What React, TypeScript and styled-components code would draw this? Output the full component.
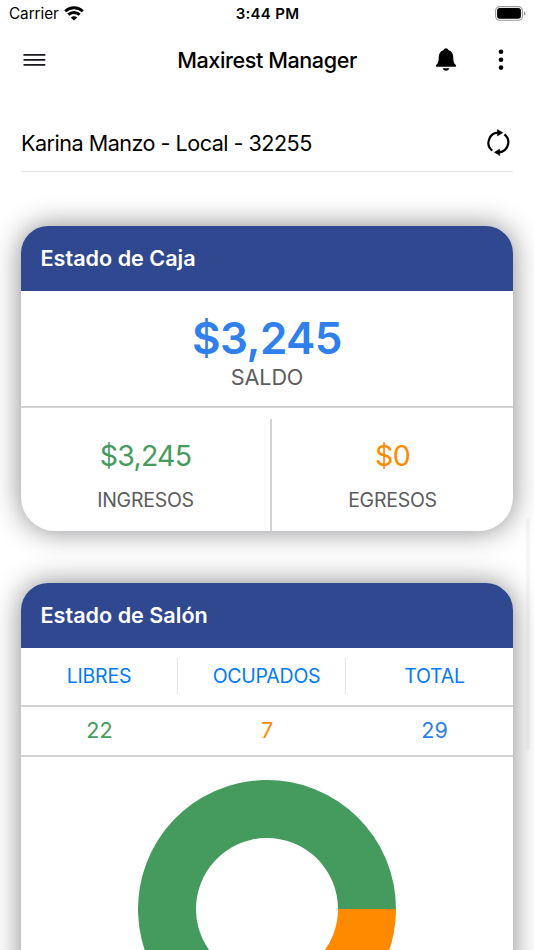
import React from "react";
import styled, { createGlobalStyle } from "styled-components";

const colors = {
  navy: "#2f4890",
  blue: "#2f80ed",
  link: "#007aff",
  green: "#459b5e",
  orange: "#ff8a00",
  gray: "#5c5c5e",
  line: "#d3d3d5",
};

const GlobalStyle = createGlobalStyle`
  *, *::before, *::after { box-sizing: border-box; }
  html, body { margin: 0; background: #fff; overflow: hidden; height: 100%; }
  svg { display: block; }
`;

const Screen = styled.div`
  position: relative;
  width: 534px;
  height: 950px;
  overflow: hidden;
  background: #fff;
  color: #000;
  font-family: Inter, "Liberation Sans", sans-serif;
`;

const Label = styled.span<{
  $size: number;
  $weight?: number;
  $color?: string;
  $spacing?: number;
}>`
  display: block;
  white-space: nowrap;
  font-size: ${(p) => p.$size}px;
  line-height: 1.2;
  font-weight: ${(p) => p.$weight ?? 400};
  color: ${(p) => p.$color ?? "#000"};
  letter-spacing: ${(p) => p.$spacing ?? 0}px;
`;

const StatusBar = styled.div`
  display: grid;
  grid-template-columns: 1fr auto 1fr;
  align-items: center;
  height: 28px;
  padding: 0 8px 0 9px;
`;

const Carrier = styled.div`
  display: flex;
  align-items: center;
  gap: 5.5px;

  svg {
    margin-bottom: 2px;
  }
`;

const BatterySlot = styled.div`
  display: flex;
  justify-content: flex-end;
  padding-bottom: 2px;
`;

const NavBar = styled.header`
  display: grid;
  grid-template-columns: 1fr auto 1fr;
  align-items: center;
  height: 64px;
  padding: 0 23px;
`;

const NavTitle = styled.div`
  padding-top: 2px;
`;

const NavActions = styled.div`
  display: flex;
  align-items: center;
  justify-content: flex-end;
  gap: 41px;
  padding-right: 7px;
`;

const IconButton = styled.button`
  display: flex;
  padding: 0;
  border: 0;
  background: none;
  color: #000;
`;

const AccountRow = styled.div`
  display: flex;
  align-items: center;
  justify-content: space-between;
  height: 58px;
  margin: 22px 21px 0;
  padding-right: 2.5px;
  border-bottom: 1px solid #e3e3e3;
`;

const AccountName = styled.div`
  padding-top: 2px;
`;

const CardList = styled.main`
  display: flex;
  flex-direction: column;
  gap: 52px;
  padding: 53.5px 21px 0;
`;

const Card = styled.section<{ $height: number }>`
  display: flex;
  flex-direction: column;
  height: ${(p) => p.$height}px;
  border-radius: 27px 27px 34px 34px;
  background: #fff;
  box-shadow: 0 0 29px rgba(0, 0, 10, 0.47);
`;

const CardHeader = styled.div`
  display: flex;
  align-items: center;
  flex: none;
  height: 65px;
  padding: 2px 0 0 19.5px;
  border-radius: 27px 27px 0 0;
  background: ${colors.navy};
`;

const Balance = styled.div`
  display: flex;
  flex-direction: column;
  align-items: center;
  gap: 1px;
  height: 117.5px;
  padding-top: 21px;
  border-bottom: 2px solid ${colors.line};
`;

const Movements = styled.div`
  display: grid;
  grid-template-columns: 251px 1fr;
  flex: 1;
  padding-top: 11px;
`;

const Movement = styled.div<{ $divided?: boolean }>`
  display: flex;
  flex-direction: column;
  align-items: center;
  gap: 16px;
  padding-top: 19.5px;
  border-right: ${(p) => (p.$divided ? `2px solid ${colors.line}` : "0")};
`;

const TableRow = styled.div<{ $height: number }>`
  display: grid;
  grid-template-columns: 157px 168px 167px;
  align-items: center;
  flex: none;
  height: ${(p) => p.$height}px;
  border-bottom: 2px solid ${colors.line};
`;

const Cell = styled.div<{ $divided?: boolean }>`
  display: flex;
  align-items: center;
  justify-content: center;
  height: 36px;
  padding-top: 1px;
  border-right: ${(p) => (p.$divided ? "1px solid #e2e2e4" : "0")};
  &:not(:first-child) {
    padding-left: 10px;
  }
`;

const ChartArea = styled.div`
  display: flex;
  justify-content: center;
  padding-top: 23.5px;
`;

const ScrollThumb = styled.div`
  position: absolute;
  top: 518px;
  right: 4px;
  width: 4px;
  height: 233px;
  border-radius: 2px;
  background: rgba(0, 0, 0, 0.035);
`;

const WifiIcon = () => (
  <svg width="20" height="15" viewBox="0 0 20 15" fill="none" stroke="#000" strokeWidth="2.9">
    <path d="M1.2 5.2C6.2.6 13.8.6 18.8 5.2" />
    <path d="M4.3 8.7C7.6 5.8 12.4 5.8 15.7 8.7" />
    <path d="M10 14.5 6.8 11.5C8.6 9.8 11.4 9.8 13.2 11.5Z" fill="#000" stroke="none" />
  </svg>
);

const BatteryIcon = () => (
  <svg width="31" height="15" viewBox="0 0 31 15">
    <rect x=".6" y=".6" width="26.8" height="13.6" rx="4" fill="none" stroke="#999" strokeWidth="1.1" />
    <rect x="2.1" y="2.1" width="23.8" height="10.6" rx="2.6" />
    <path d="M29 5.2C31 6 31 8.9 29 9.7Z" fill="#999" />
  </svg>
);

const MenuIcon = () => (
  <svg width="23" height="14" viewBox="0 0 23 14" stroke="#16161c" strokeWidth="1.8" strokeLinecap="round">
    <path d="M1.2 1.9H21.6M1.2 6.8H21.6M1.2 11.8H21.6" />
  </svg>
);

const BellIcon = () => (
  <svg width="22" height="24" viewBox="0 0 22 24">
    <path d="M11 .3C12.2.3 13 1.1 13.4 2C16.7 3.1 18.1 5.8 18.2 8.8C18.3 13.7 18.9 15.2 20.8 17.1C21.5 17.9 21 18.8 20.2 18.8H1.8C1 18.8.5 17.9 1.2 17.1C3.1 15.2 3.7 13.7 3.8 8.8C3.9 5.8 5.3 3.1 8.6 2C9 1.1 9.8.3 11 .3Z" />
    <path d="M7.6 20.3H14.4C13.6 23.6 8.4 23.6 7.6 20.3Z" />
  </svg>
);

const MoreIcon = () => (
  <svg width="6" height="22" viewBox="0 0 6 22">
    <circle cx="3" cy="2.8" r="2.3" />
    <circle cx="3" cy="10.7" r="2.3" />
    <circle cx="3" cy="18.6" r="2.3" />
  </svg>
);

const RefreshIcon = () => (
  <svg width="24" height="28" viewBox="0 0 24 28">
    <g fill="none" stroke="#000" strokeWidth="2.2">
      <path d="M5.2 21.6A10.1 10.1 0 0 1 11.8 3.7" />
      <path d="M17.4 5.3A10.1 10.1 0 0 1 12 23.3" />
    </g>
    <path d="M10.4.5 15.8 3.7 10.4 7ZM12.7 20.1 7.4 23.3 12.7 26.5Z" stroke="#000" strokeWidth=".5" />
  </svg>
);

const OUTER = 129;
const INNER = 71;

const slicePath = (from: number, to: number) => {
  const point = (radius: number, turn: number) =>
    `${OUTER + radius * Math.cos(turn * 2 * Math.PI)} ${OUTER + radius * Math.sin(turn * 2 * Math.PI)}`;
  const large = to - from > 0.5 ? 1 : 0;
  return `M${point(OUTER, from)}A${OUTER} ${OUTER} 0 ${large} 1 ${point(OUTER, to)}L${point(INNER, to)}A${INNER} ${INNER} 0 ${large} 0 ${point(INNER, from)}Z`;
};

const Donut = ({ free, busy }: { free: number; busy: number }) => {
  const share = busy / (free + busy);
  return (
    <svg width={OUTER * 2} height={OUTER * 2}>
      <path d={slicePath(0, share)} fill={colors.orange} />
      <path d={slicePath(share, 1)} fill={colors.green} />
    </svg>
  );
};

export default function App() {
  return (
    <Screen>
      <GlobalStyle />
      <StatusBar>
        <Carrier>
          <Label $size={15.3} $spacing={-0.05}>Carrier</Label>
          <WifiIcon />
        </Carrier>
        <Label $size={15} $weight={600} $spacing={0.3}>3:44 PM</Label>
        <BatterySlot>
          <BatteryIcon />
        </BatterySlot>
      </StatusBar>
      <NavBar>
        <IconButton aria-label="Menu"><MenuIcon /></IconButton>
        <NavTitle>
          <Label $size={21.6} $weight={450} $spacing={-0.42}>Maxirest Manager</Label>
        </NavTitle>
        <NavActions>
          <IconButton aria-label="Notificaciones"><BellIcon /></IconButton>
          <IconButton aria-label="Más opciones"><MoreIcon /></IconButton>
        </NavActions>
      </NavBar>
      <AccountRow>
        <AccountName>
          <Label $size={21.6} $spacing={-0.52}>Karina Manzo - Local - 32255</Label>
        </AccountName>
        <IconButton aria-label="Actualizar"><RefreshIcon /></IconButton>
      </AccountRow>
      <CardList>
        <Card $height={305}>
          <CardHeader>
            <Label $size={21.6} $weight={600} $color="#fff">Estado de Caja</Label>
          </CardHeader>
          <Balance>
            <Label $size={44} $weight={600} $color={colors.blue} $spacing={-0.6}>$3,245</Label>
            <Label $size={21.6} $weight={430} $color={colors.gray} $spacing={-0.1}>SALDO</Label>
          </Balance>
          <Movements>
            <Movement $divided>
              <Label $size={28.5} $weight={440} $color={colors.green} $spacing={-0.75}>$3,245</Label>
              <Label $size={19.5} $weight={430} $color={colors.gray} $spacing={-0.25}>INGRESOS</Label>
            </Movement>
            <Movement>
              <Label $size={28.5} $weight={440} $color={colors.orange} $spacing={-0.75}>$0</Label>
              <Label $size={19.5} $weight={430} $color={colors.gray} $spacing={-0.25}>EGRESOS</Label>
            </Movement>
          </Movements>
        </Card>
        <Card $height={520}>
          <CardHeader>
            <Label $size={21.6} $weight={600} $color="#fff">Estado de Salón</Label>
          </CardHeader>
          <TableRow $height={59}>
            <Cell $divided><Label $size={19.5} $weight={430} $color={colors.link} $spacing={-0.25}>LIBRES</Label></Cell>
            <Cell $divided><Label $size={19.5} $weight={430} $color={colors.link} $spacing={-0.25}>OCUPADOS</Label></Cell>
            <Cell><Label $size={19.5} $weight={430} $color={colors.link} $spacing={-0.25}>TOTAL</Label></Cell>
          </TableRow>
          <TableRow $height={50}>
            <Cell><Label $size={21.6} $weight={430} $color={colors.green}>22</Label></Cell>
            <Cell><Label $size={21.6} $weight={430} $color={colors.orange}>7</Label></Cell>
            <Cell><Label $size={21.6} $weight={430} $color={colors.blue}>29</Label></Cell>
          </TableRow>
          <ChartArea>
            <Donut free={22} busy={7} />
          </ChartArea>
        </Card>
      </CardList>
      <ScrollThumb />
    </Screen>
  );
}
